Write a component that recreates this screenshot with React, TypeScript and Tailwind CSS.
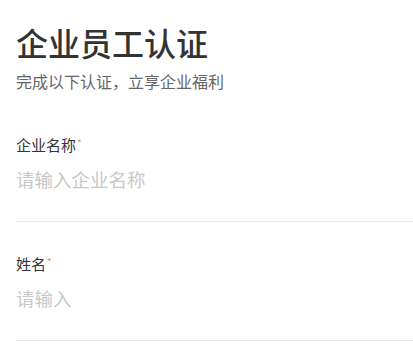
import React from "react";

const font = { fontFamily: '"Noto Sans CJK SC", "Noto Sans", sans-serif' };

function Field({ label, placeholder }: { label: string; placeholder: string }) {
  return (
    <div className="pl-4">
      <div className="flex items-start text-[15px] leading-[22px] text-[#333]">
        <span>{label}</span>
        <span className="text-[10px] leading-[18px] text-[#f08a60] ml-[1px]">*</span>
      </div>
      <div className="mt-[10px] text-[18.5px] leading-[26px] text-[#c8c8c8]">{placeholder}</div>
      <div className="mt-[29px] h-px bg-[#e8e8e8]" />
    </div>
  );
}

export default function App() {
  return (
    <div className="w-[413px] h-[349px] bg-white overflow-hidden" style={font}>
      <div className="pl-4 pt-[20px]">
        <h1 className="text-[32px] leading-[44px] font-medium text-[#333]">企业员工认证</h1>
        <p className="mt-[6px] text-[16px] leading-[22px] text-[#666]">完成以下认证，立享企业福利</p>
      </div>
      <div className="mt-[42px]">
        <Field label="企业名称" placeholder="请输入企业名称" />
      </div>
      <div className="mt-[31px]">
        <Field label="姓名" placeholder="请输入" />
      </div>
    </div>
  );
}
